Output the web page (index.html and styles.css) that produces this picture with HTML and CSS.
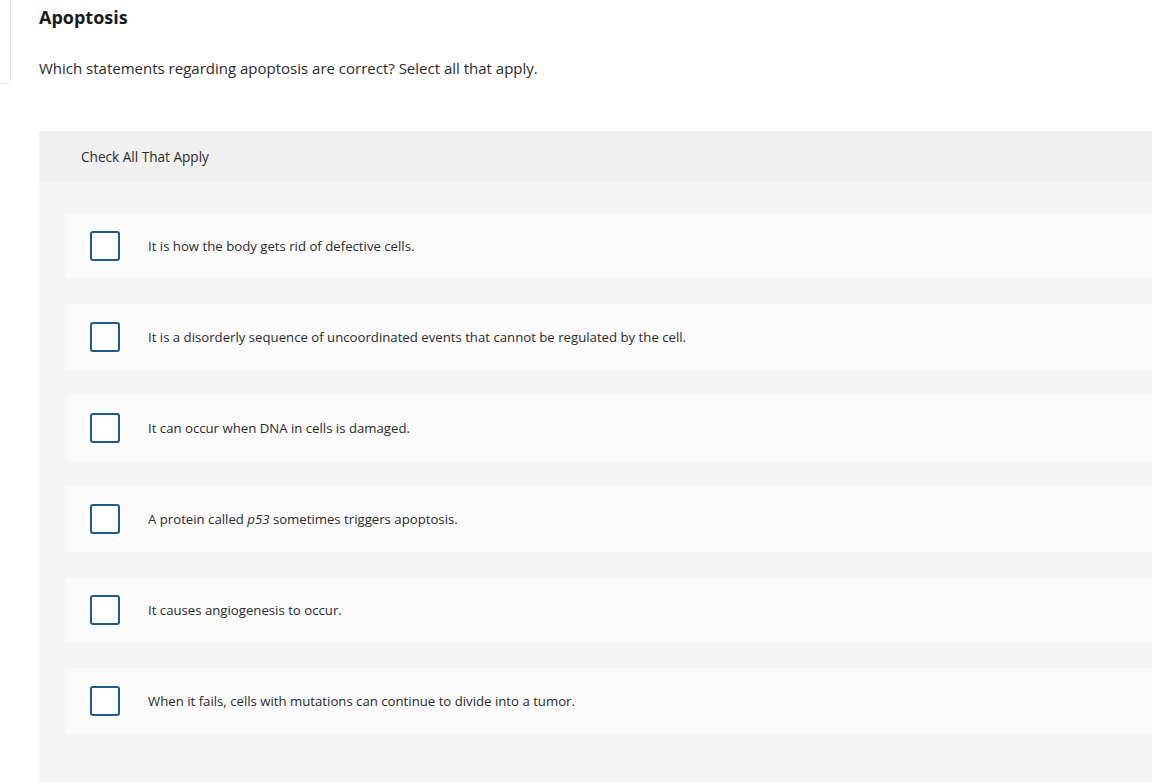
FILE: index.html
```html
<!DOCTYPE html>
<html lang="en">
<head>
<meta charset="utf-8">
<title>Apoptosis</title>
<link rel="stylesheet" href="styles.css">
</head>
<body>
<div class="page">
  <div class="edge"></div>
  <div class="main">
    <h1 class="title">Apoptosis</h1>
    <p class="prompt">Which statements regarding apoptosis are correct? Select all that apply.</p>
    <div class="panel">
      <div class="panel-head">Check All That Apply</div>
      <div class="panel-body">
        <label class="option"><span class="box"></span><span class="opt-text">It is how the body gets rid of defective cells.</span></label>
        <label class="option"><span class="box"></span><span class="opt-text">It is a disorderly sequence of uncoordinated events that cannot be regulated by the cell.</span></label>
        <label class="option"><span class="box"></span><span class="opt-text">It can occur when DNA in cells is damaged.</span></label>
        <label class="option"><span class="box"></span><span class="opt-text">A protein called <em>p53</em> sometimes triggers apoptosis.</span></label>
        <label class="option"><span class="box"></span><span class="opt-text">It causes angiogenesis to occur.</span></label>
        <label class="option"><span class="box"></span><span class="opt-text">When it fails, cells with mutations can continue to divide into a tumor.</span></label>
      </div>
    </div>
  </div>
</div>
</body>
</html>
```
FILE: styles.css
```css
html, body {
  margin: 0;
  padding: 0;
  background: #ffffff;
}
body {
  font-family: "Open Sans", "Liberation Sans", Arial, sans-serif;
  color: #2b2b2b;
  overflow: hidden;
}
.page {
  display: flex;
  align-items: flex-start;
}
.edge {
  flex: 0 0 10px;
  height: 83px;
  border-right: 1px solid #e4e4e4;
  border-bottom: 1px solid #e4e4e4;
  border-bottom-right-radius: 5px;
}
.main {
  flex: 1;
  min-width: 0;
  padding-left: 28px;
}
.title {
  margin: 5px 0 0 0;
  font-size: 18px;
  line-height: 24px;
  font-weight: 700;
  color: #1a1a1a;
}
.prompt {
  margin: 28px 0 0 0;
  font-size: 15px;
  line-height: 22px;
  color: #2b2b2b;
}
.panel {
  margin-top: 52px;
  background: #f5f5f5;
  padding-bottom: 60px;
}
.panel-head {
  height: 50px;
  background: #f0f0f0;
  display: flex;
  align-items: center;
  padding-left: 42px;
  font-size: 13.6px;
  color: #2b2b2b;
}
.panel-body {
  padding: 32px 0 0 26px;
  display: flex;
  flex-direction: column;
  gap: 25px;
}
.option {
  height: 66px;
  background: #fafafa;
  border-radius: 3px 0 0 3px;
  display: flex;
  align-items: center;
  padding-left: 25px;
  gap: 28px;
}
.box {
  flex: 0 0 auto;
  width: 26px;
  height: 26px;
  border: 2px solid #1f5a8f;
  border-radius: 3px;
  background: #ffffff;
}
.opt-text {
  font-size: 13.2px;
  color: #2b2b2b;
}
.opt-text em {
  font-style: italic;
}
```
